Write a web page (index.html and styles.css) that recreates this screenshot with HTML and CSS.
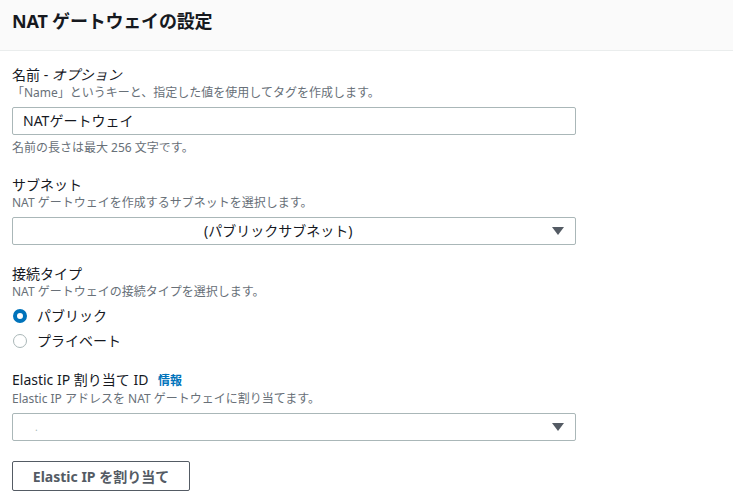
FILE: index.html
```html
<!DOCTYPE html>
<html lang="ja">
<head>
<meta charset="utf-8">
<link rel="stylesheet" href="styles.css">
</head>
<body>
<div class="panel">
  <div class="header"><h2 class="title">NAT ゲートウェイの設定</h2></div>
  <div class="body">
    <div class="field f-name">
      <div class="label">名前 - <i>オプション</i></div>
      <div class="desc">「Name」というキーと、指定した値を使用してタグを作成します。</div>
      <div class="input">NATゲートウェイ</div>
      <div class="hint">名前の長さは最大 256 文字です。</div>
    </div>
    <div class="field f-subnet">
      <div class="label">サブネット</div>
      <div class="desc">NAT ゲートウェイを作成するサブネットを選択します。</div>
      <div class="select"><span class="sel-text">(パブリックサブネット)</span><span class="caret"></span></div>
    </div>
    <div class="field f-type">
      <div class="label">接続タイプ</div>
      <div class="desc">NAT ゲートウェイの接続タイプを選択します。</div>
      <div class="radios">
        <div class="radio"><span class="dot on"></span><span>パブリック</span></div>
        <div class="radio"><span class="dot"></span><span>プライベート</span></div>
      </div>
    </div>
    <div class="field f-eip">
      <div class="label">Elastic IP 割り当て ID <span class="info">情報</span></div>
      <div class="desc">Elastic IP アドレスを NAT ゲートウェイに割り当てます。</div>
      <div class="select"><span class="sel-text blank">.</span><span class="caret"></span></div>
    </div>
    <div class="btn">Elastic IP を割り当て</div>
  </div>
</div>
</body>
</html>
```

FILE: styles.css
```css
* { box-sizing: border-box; }
html, body { margin: 0; padding: 0; background: #fff; }
body {
  font-family: "Noto Sans", "Noto Sans CJK JP", sans-serif;
  color: #16191f;
  width: 733px;
  height: 500px;
  overflow: hidden;
}
.header {
  background: #fafafa;
  border-bottom: 1px solid #eaeded;
  height: 51px;
  padding: 8px 12px 0;
}
.title {
  margin: 0;
  font-size: 18px;
  font-weight: 700;
  line-height: 26px;
  letter-spacing: -0.2px;
}
.body { padding: 14px 12px 0; }
.field { width: 564px; }
.label { font-size: 14px; line-height: 20px; }
.label i { font-style: italic; }
.desc { font-size: 12px; line-height: 16px; color: #687078; margin-bottom: 6px; }
.hint { font-size: 12px; line-height: 16px; color: #687078; margin-top: 5px; }
.input, .select {
  height: 28px;
  border: 1px solid #aab7b8;
  border-radius: 2px;
  font-size: 14px;
  line-height: 26px;
  padding: 0 10px;
}
.select { display: flex; align-items: center; position: relative; }
.sel-text { flex: 1; padding-left: 181px; }
.sel-text.blank { color: #aab7b8; padding-left: 12px; font-size: 10px; }
.caret {
  width: 0; height: 0;
  border-left: 6px solid transparent;
  border-right: 6px solid transparent;
  border-top: 8px solid #545b64;
  margin-right: 1px;
}
.f-subnet { margin-top: 19px; }
.f-type { margin-top: 19px; }
.f-eip { margin-top: 19px; }
.radios { display: flex; flex-direction: column; gap: 5px; }
.radio { display: flex; align-items: center; font-size: 14px; line-height: 20px; gap: 10px; }
.dot {
  width: 14px; height: 14px; border-radius: 50%;
  border: 1px solid #aab7b8; margin-left: 1px;
}
.dot.on { border: 4px solid #0073bb; }
.info { color: #0073bb; font-weight: 700; font-size: 12px; margin-left: 6px; }
.btn {
  margin-top: 20px;
  width: 178px;
  height: 30px;
  border: 1px solid #545b64;
  border-radius: 2px;
  color: #545b64;
  font-weight: 700;
  font-size: 14px;
  display: flex;
  align-items: center;
  justify-content: center;
}
```
